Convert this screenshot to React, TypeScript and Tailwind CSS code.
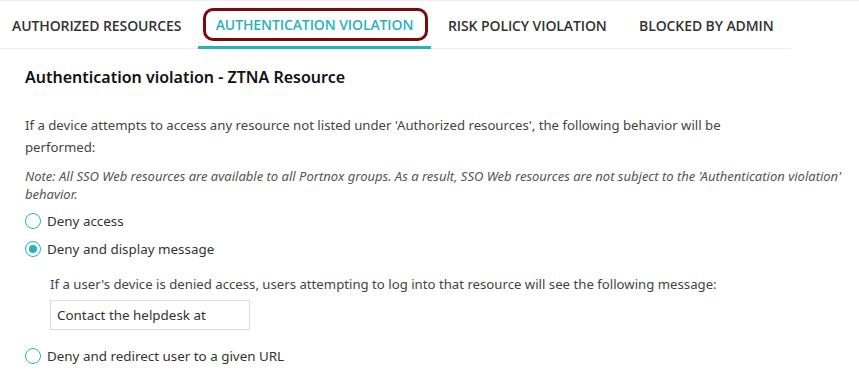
import { useState } from 'react';

const tabs = ['AUTHORIZED RESOURCES', 'AUTHENTICATION VIOLATION', 'RISK POLICY VIOLATION', 'BLOCKED BY ADMIN'];

const options = [
    { id: 'deny', label: 'Deny access' },
    { id: 'message', label: 'Deny and display message' },
    { id: 'redirect', label: 'Deny and redirect user to a given URL' },
];

function Radio({ checked, label, onClick }: { checked: boolean; label: string; onClick: () => void }) {
    return (
        <button type="button" onClick={onClick} className="flex items-center gap-[6px] text-[13.4px] text-[#333] leading-[20px]">
            <span className="w-[16px] h-[16px] rounded-full border border-[#29b1c3] flex items-center justify-center">
                {checked && <span className="w-[8px] h-[8px] rounded-full bg-[#29b1c3]" />}
            </span>
            {label}
        </button>
    );
}

export default function App() {
    const [active, setActive] = useState(1);
    const [choice, setChoice] = useState('message');

    return (
        <div className="w-[859px] h-[379px] bg-white border-t border-[#eeeeee] font-['Open_Sans',sans-serif] overflow-hidden">
            <div className="flex w-[791px] h-[48px] border-b border-[#eeeeee]">
                {tabs.map((tab, i) => (
                    <button
                        key={tab}
                        type="button"
                        onClick={() => setActive(i)}
                        className={`relative h-[48px] px-[12px] pt-[1px] text-[14px] font-semibold tracking-[-0.1px] ${i === active ? 'text-[#29b1c3]' : 'text-[#333]'} ${i === 1 ? 'w-[233px] border-b-[3px] border-[#29b1c3] mb-[-1px]' : ''} ${i === 0 ? 'w-[198px] text-left' : ''} ${i === 2 ? 'w-[193px] text-left pl-[17px]' : ''} ${i === 3 ? 'text-left pl-[15px]' : ''}`}
                    >
                        {tab}
                        {i === 1 && (
                            <span className="absolute left-[5px] right-[3px] top-[7px] bottom-[5px] rounded-[10px] border-[3px] border-[#7d0a0a]" />
                        )}
                    </button>
                ))}
            </div>

            <div className="px-[25px] pt-[17px] font-['Noto_Sans',sans-serif]">
                <h2 className="text-[16px] font-semibold text-[#111] leading-[22px]">Authentication violation - ZTNA Resource</h2>
                <p className="mt-[26px] text-[13.2px] text-[#444] leading-[22px] w-[720px]">
                    If a device attempts to access any resource not listed under 'Authorized resources', the following behavior will be performed:
                </p>
                <p className="mt-[9px] text-[13px] italic text-[#555] leading-[18px] w-[830px]">
                    Note: All SSO Web resources are available to all Portnox groups. As a result, SSO Web resources are not subject to the 'Authentication violation' behavior.
                </p>
                <div className="mt-[8px] flex flex-col gap-[8px]">
                    {options.map(o => (
                        <div key={o.id}>
                            <Radio checked={choice === o.id} label={o.label} onClick={() => setChoice(o.id)} />
                            {o.id === 'message' && (
                                <div className="pl-[25px] pt-[15px] pb-[8px]">
                                    <p className="text-[13.2px] text-[#444] leading-[20px]">
                                        If a user's device is denied access, users attempting to log into that resource will see the following message:
                                    </p>
                                    <input
                                        defaultValue="Contact the helpdesk at"
                                        className="mt-[6px] w-[200px] h-[30px] border border-[#dddddd] px-[6px] text-[13.4px] text-[#333] outline-none"
                                    />
                                </div>
                            )}
                        </div>
                    ))}
                </div>
            </div>
        </div>
    );
}
